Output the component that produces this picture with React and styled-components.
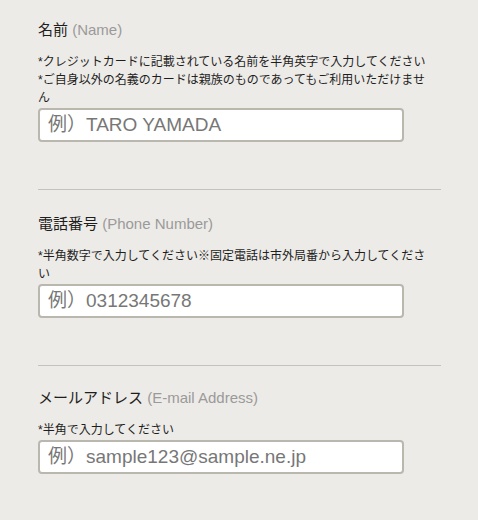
import React from "react";
import styled, { createGlobalStyle } from "styled-components";

const Global = createGlobalStyle`
  html, body { margin: 0; padding: 0; background: #edebe7; }
  body {
    font-family: "Liberation Sans", Arial, "Noto Sans CJK JP", sans-serif;
    color: #222;
  }
  * { box-sizing: border-box; }
`;

const Page = styled.div`
  padding: 0 37px 0 38px;
  background: #edebe7;
  min-height: 520px;
`;

const Section = styled.section`
  padding: ${(p) => (p.$first ? "20px" : p.$last ? "22px" : "24px")} 0
    ${(p) => (p.$last ? "40px" : "47px")};
  border-bottom: ${(p) => (p.$last ? "none" : "1px solid #c4c2bc")};
`;

const Title = styled.div`
  font-size: 15px;
  line-height: 20px;
  color: #1e1e1e;
  margin-bottom: 13px;
`;

const Sub = styled.span`
  color: #9a9a9a;
`;

const Notes = styled.div`
  max-width: 395px;
  font-size: 12px;
  line-height: 18px;
  color: #1e1e1e;
  margin-bottom: 1px;
`;

const Input = styled.input`
  display: block;
  width: 366px;
  height: 34px;
  border: 2px solid #b9b7ae;
  border-radius: 4px;
  background: #fff;
  padding: 0 8px;
  font-family: "Liberation Sans", Arial, "Noto Sans CJK JP", sans-serif;
  font-size: 19px;
  color: #222;
  outline: none;
  &::placeholder { color: #777; }
`;

const fields = [
  {
    ja: "名前",
    en: "(Name)",
    notes: [
      "*クレジットカードに記載されている名前を半角英字で入力してください",
      "*ご自身以外の名義のカードは親族のものであってもご利用いただけません",
    ],
    ph: "例）TARO YAMADA",
  },
  {
    ja: "電話番号",
    en: "(Phone Number)",
    notes: ["*半角数字で入力してください※固定電話は市外局番から入力してください"],
    ph: "例）0312345678",
  },
  {
    ja: "メールアドレス",
    en: "(E-mail Address)",
    notes: ["*半角で入力してください"],
    ph: "例）sample123@sample.ne.jp",
  },
];

export default function App() {
  return (
    <Page>
      <Global />
      {fields.map((f, i) => (
        <Section key={f.ja} $first={i === 0} $last={i === fields.length - 1}>
          <Title>
            {f.ja} <Sub>{f.en}</Sub>
          </Title>
          <Notes>
            {f.notes.map((n) => (
              <div key={n}>{n}</div>
            ))}
          </Notes>
          <Input placeholder={f.ph} />
        </Section>
      ))}
    </Page>
  );
}
